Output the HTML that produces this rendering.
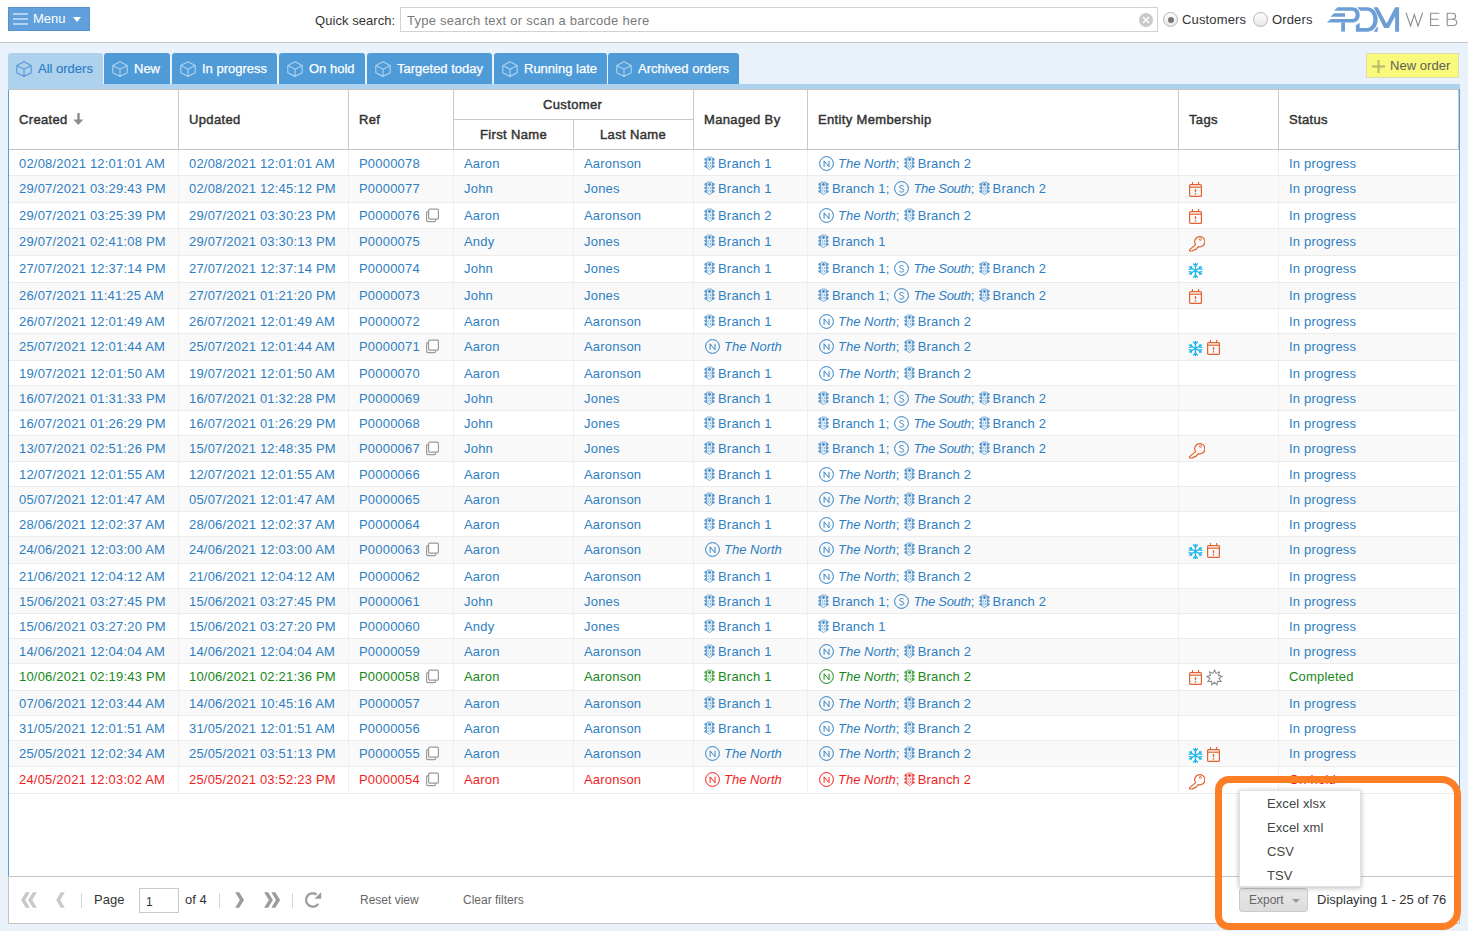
<!DOCTYPE html>
<html><head><meta charset="utf-8"><title>Orders</title>
<style>
*{box-sizing:border-box}
html,body{margin:0;padding:0}
body{width:1468px;height:931px;overflow:hidden;position:relative;background:#fff;font-family:"Liberation Sans",sans-serif;font-size:13px;color:#333}
.a{position:absolute}
#top{position:absolute;left:0;top:0;width:1468px;height:43px;background:#fff;border-bottom:1px solid #c6c6c6}
#main{position:absolute;left:0;top:43px;width:1468px;height:888px;background:#e9f1fb}
.menu{position:absolute;left:8px;top:7px;width:82px;height:24px;background:#60a0dc;border:1px solid #5694d0}
.menu .hb{position:absolute;left:4px;width:15px;height:2px;background:#b3d0ee}
.menu .lbl{position:absolute;left:24px;top:3px;color:#fff;font-size:13px;line-height:15px}
.menu .arr{position:absolute;left:64px;top:9px;width:0;height:0;border-left:4px solid transparent;border-right:4px solid transparent;border-top:5px solid #fff}
.qs{position:absolute;left:315px;top:13px;font-size:13px;line-height:16px;color:#333;letter-spacing:0.05px}
.inp{position:absolute;left:400px;top:7px;width:758px;height:25px;border:1px solid #d2d2d2;background:#fff}
.inp .ph{position:absolute;left:6px;top:5px;font-size:13px;line-height:16px;color:#7a7a7a;letter-spacing:0.25px}
.clr{position:absolute;left:738px;top:5px;width:14px;height:14px;border-radius:50%;background:#c9c9c9}
.radio{position:absolute;top:12px;width:15px;height:15px;border-radius:50%;border:1px solid #b5b5b5;background:linear-gradient(#fdfdfd,#e9e9e9)}
.radio .dot{position:absolute;left:3.5px;top:3.5px;width:6px;height:6px;border-radius:50%;background:#777}
.rl{position:absolute;top:12px;font-size:13px;line-height:16px;color:#333;letter-spacing:0.15px}
.tab{position:absolute;top:53px;height:31px;background:#4e9bd8;border-radius:3px 3px 0 0;color:#fff;font-size:13px}
.tab svg{position:absolute;left:8px;top:8px;width:16px;height:16px;color:#a9d0f0}
.tab span{position:absolute;left:30px;top:8px;line-height:15px;-webkit-text-stroke:0.25px #fff;white-space:nowrap}
.tab.act{background:#aed1ee;color:#2a7dc6}
.tab.act svg{color:#5b9ad6}
.tab.act span{-webkit-text-stroke:0.15px #2a7dc6}
.strip{position:absolute;left:8px;top:84px;width:1452px;height:5px;background:#aed1ee}
.neworder{position:absolute;left:1366px;top:53px;width:93px;height:25px;background:#f9f97b;border:1px solid #dcdcb4}
.grid{position:absolute;left:8px;top:89px;width:1452px;height:788px;background:#fff;border-left:1px solid #5c9ad8;border-right:1px solid #5c9ad8}
.gtop{position:absolute;left:8px;top:89px;width:1451px;height:1px;background:#c4c4c4}
.hdr{position:absolute;top:90px;height:59px}
.hb2{position:absolute;top:149px;left:9px;width:1450px;height:1px;background:#c4c4c4}
.hv{position:absolute;top:90px;width:1px;height:59px;background:#c8c8c8}
.ht{position:absolute;margin-top:1px;font-weight:normal;-webkit-text-stroke:0.45px #333;letter-spacing:0.35px;font-size:13px;line-height:16px;color:#333;white-space:nowrap}
.row{position:absolute;left:9px;width:1449px}
.rb{position:absolute;left:9px;width:1449px;height:1px;background:#ececec}
.vl{position:absolute;top:150px;width:1px;height:644px;background:#efefef}
.rc .t{position:absolute;white-space:nowrap;font-size:13px;line-height:16px;letter-spacing:0.2px}
.rc svg{position:absolute}
.cp{width:16px;height:16px}
.tg{width:18px;height:18px}
.e svg.tl{position:static;display:inline-block;width:11px;height:14px;vertical-align:-2px;margin-right:3px;color:inherit}
.e svg.ci{position:static;display:inline-block;width:15px;height:15px;vertical-align:-3px;margin-left:1px;margin-right:4px;color:inherit}
.e{margin-right:4px}
.e i{font-style:italic;letter-spacing:-0.3px}
.tb{position:absolute;left:8px;top:876px;width:1452px;height:48px;background:#fff;border:1px solid #c4c4c4}
.tbt{position:absolute;font-size:13px;line-height:15px;color:#333;white-space:nowrap}
.tbs{position:absolute;top:893px;width:1px;height:15px;background:#d6d6d6}
.tbg{position:absolute;font-size:12px;line-height:14px;color:#666;white-space:nowrap}
.orange{position:absolute;left:1215px;top:776px;width:246px;height:154px;border:7px solid #fd7e25;border-radius:14px 19px 19px 14px}
.emenu{position:absolute;left:1239px;top:790px;width:122px;height:97px;background:#fff;border:1px solid #e0e0e0;box-shadow:0 1px 5px rgba(0,0,0,0.28)}
.emenu div{position:absolute;left:26px;font-size:13px;line-height:16px;color:#444;letter-spacing:0.1px}
.export{position:absolute;left:1239px;top:888px;width:69px;height:24px;border:1px solid #cacaca;border-radius:3px;background:linear-gradient(#e8e8e8,#dcdcdc)}
</style></head><body>
<svg width="0" height="0" style="position:absolute">
<defs>
<symbol id="tl" viewBox="0 0 11 14">
<g opacity="0.9">
<path d="M3.2 1.1h4.6l0.4 0.6v10.2l-2.7 1.6l-2.7-1.6V1.7z" fill="none" stroke="currentColor" stroke-width="0.95" opacity="0.75"/>
<circle cx="5.5" cy="3.5" r="1.4" fill="currentColor"/>
<circle cx="5.5" cy="7" r="1.1" fill="none" stroke="currentColor" stroke-width="0.8" stroke-dasharray="1 0.7"/>
<circle cx="5.5" cy="10.2" r="1.1" fill="none" stroke="currentColor" stroke-width="0.8" stroke-dasharray="1 0.7"/>
<path d="M2.7 1.9C1.2 1.9 0.3 2.4 0.3 3.3C0.3 4.3 1.3 4.8 2.7 4.9zM8.3 1.9C9.8 1.9 10.7 2.4 10.7 3.3C10.7 4.3 9.7 4.8 8.3 4.9zM2.7 5.4C1.2 5.4 0.3 5.9 0.3 6.8C0.3 7.8 1.3 8.3 2.7 8.4zM8.3 5.4C9.8 5.4 10.7 5.9 10.7 6.8C10.7 7.8 9.7 8.3 8.3 8.4zM2.7 8.9C1.2 8.9 0.3 9.4 0.3 10.3C0.3 11.3 1.3 11.8 2.7 11.9zM8.3 8.9C9.8 8.9 10.7 9.4 10.7 10.3C10.7 11.3 9.7 11.8 8.3 11.9z" fill="currentColor" opacity="0.85"/>
</g>
</symbol>
<symbol id="cn" viewBox="0 0 15 15">
<circle cx="7.5" cy="7.5" r="6.9" fill="none" stroke="currentColor" stroke-width="1"/>
<path d="M5.1 10.8V4.8L10 10.8V4.8" fill="none" stroke="currentColor" stroke-width="0.95"/>
</symbol>
<symbol id="cs" viewBox="0 0 15 15">
<circle cx="7.5" cy="7.5" r="6.9" fill="none" stroke="currentColor" stroke-width="1"/>
<path d="M9.6 5.2c-0.4-0.5-1.1-0.8-2-0.8c-1.2 0-2 0.6-2 1.5c0 1.9 4.2 1.3 4.2 3.4c0 1-0.9 1.7-2.2 1.7c-0.9 0-1.7-0.3-2.2-0.9" fill="none" stroke="currentColor" stroke-width="0.95"/>
</symbol>
<symbol id="copy" viewBox="0 0 16 16">
<rect x="1.6" y="4.6" width="9" height="10" rx="1.3" fill="none" stroke="#9a9a9a" stroke-width="1.2"/>
<rect x="3.6" y="2.2" width="9.8" height="10" rx="1.3" fill="#fff" stroke="#9a9a9a" stroke-width="1.2"/>
</symbol>
<symbol id="cal" viewBox="0 0 18 18">
<rect x="2.6" y="3.6" width="11.8" height="11.8" rx="1" fill="none" stroke="#e0622e" stroke-width="1.2"/>
<path d="M2.6 6.2h11.8" stroke="#e0622e" stroke-width="1.2"/>
<path d="M5.5 1v2.6M11.6 1v2.6" stroke="#e0622e" stroke-width="1.1"/>
<path d="M8.5 8.1v3" stroke="#e0622e" stroke-width="1.3"/>
<circle cx="8.5" cy="12.9" r="0.8" fill="#e0622e"/>
</symbol>
<symbol id="key" viewBox="0 0 18 18">
<path d="M11.3 12.6L9 15.3H8L7.3 16.2H6.3L5.6 17H2.6V15.6L8.6 10.6A5.1 5.1 0 1 1 11.3 12.6Z" fill="none" stroke="#e0622e" stroke-width="1.2" stroke-linejoin="round"/>
<circle cx="13.4" cy="5.4" r="1" fill="none" stroke="#e0622e" stroke-width="0.9"/>
</symbol>
<symbol id="snow" viewBox="0 0 18 18">
<g stroke="#1fb5ec" stroke-width="1.4" stroke-linecap="round" fill="none">
<path d="M8.5 2.5v14M2.4 6l12.2 7M2.4 13l12.2-7"/>
<path d="M6.6 3l1.9 1.7l1.9-1.7M6.6 16l1.9-1.7l1.9 1.7"/>
<path d="M2.2 8.4l2.5-0.6l-0.7-2.4M14.8 10.6l-2.5 0.6l0.7 2.4M2.2 10.6l2.5 0.6l-0.7 2.4M14.8 8.4l-2.5-0.6l0.7-2.4"/>
</g>
</symbol>
<symbol id="star" viewBox="0 0 18 18"><path d="M9.50 1.10L11.07 4.38L14.39 2.88L13.48 6.40L16.98 7.38L14.03 9.50L16.08 12.50L12.46 12.22L12.10 15.84L9.50 13.30L6.90 15.84L6.54 12.22L2.92 12.50L4.97 9.50L2.02 7.38L5.52 6.40L4.61 2.88L7.93 4.38Z" fill="none" stroke="#8c8c8c" stroke-width="1.1" stroke-linejoin="miter"/></symbol>
<symbol id="cube" viewBox="0 0 16 16">
<path d="M8 0.7l7.2 3.8v7.2L8 15.4L0.8 11.7V4.5zM0.8 4.5L8 8.2l7.2-3.7M8 8.2v7.2" fill="none" stroke="currentColor" stroke-width="1.2" stroke-linejoin="round"/>
</symbol>
</defs>
</svg>

<div id="top">
  <div class="menu">
    <div class="hb" style="top:5px"></div><div class="hb" style="top:10px"></div><div class="hb" style="top:15px"></div>
    <div class="lbl">Menu</div>
    <div class="arr"></div>
  </div>
  <div class="qs">Quick search:</div>
  <div class="inp"><div class="ph">Type search text or scan a barcode here</div>
    <div class="clr"><svg width="14" height="14" style="position:absolute;left:0;top:0"><path d="M4 4l6 6M10 4l-6 6" stroke="#fff" stroke-width="1.5"/></svg></div>
  </div>
  <div class="radio" style="left:1163px"><div class="dot"></div></div>
  <div class="rl" style="left:1182px">Customers</div>
  <div class="radio" style="left:1253px"></div>
  <div class="rl" style="left:1272px">Orders</div>
  <svg class="a" style="left:1324px;top:4px" width="80" height="32" viewBox="0 0 80 32">
    <g fill="#6d9fd6">
      <path d="M13.6 3.3H28C33.2 3.3 35.7 6.6 35.7 10.9C35.7 15.2 33.2 18.5 28 18.5H2.7L6.8 15H28C30.4 15 31.6 13.2 31.6 10.9C31.6 8.6 30.4 6.8 28 6.8H10.1Z"/>
      <path d="M10.1 9.3H21V12.8H6.5Z"/>
      <path d="M17.2 18.5H21V27.6H17.2Z"/>
      <path d="M33 3.3H43C49.5 3.3 53.7 8.8 53.7 15.5C53.7 22.4 49.5 27.8 43 27.8H31.9V21.3L35.7 18.8V24H43C47 24 49.3 20.3 49.3 15.5C49.3 10.7 47 6.8 43 6.8H36.5Z"/>
      <path d="M49.6 27.8L53.7 22V27.8Z"/>
      <path d="M49.6 3.3H53.7L62.6 19.6L71.1 3.3H75.1V27.8H71.1V12.3L64.9 24H60.2Z"/>
    </g>
  </svg>
  <svg class="a" style="left:1400px;top:8px" width="64" height="24" viewBox="1400 8 64 24">
    <g fill="none" stroke="#8e8e8e" stroke-width="1.1">
      <path d="M1406 12.8L1410.6 26L1414.3 14.6L1418 26L1422.6 12.8"/>
      <path d="M1439.4 13.3H1430.6V25.5H1439.4M1430.6 19.3H1438.6"/>
      <path d="M1447.2 25.5V13.3H1452C1454.4 13.3 1455.6 14.5 1455.6 16.2C1455.6 17.9 1454.4 19.2 1452 19.2H1447.2M1452 19.2C1455 19.2 1456.8 20.5 1456.8 22.4C1456.8 24.3 1455 25.5 1452 25.5H1447.2"/>
    </g>
  </svg>
</div>
<div id="main"></div>
<div class="tab act" style="left:8px;width:95px"><svg><use href="#cube"/></svg><span>All orders</span></div>
<div class="tab" style="left:104px;width:66px"><svg><use href="#cube"/></svg><span>New</span></div>
<div class="tab" style="left:172px;width:105px"><svg><use href="#cube"/></svg><span>In progress</span></div>
<div class="tab" style="left:279px;width:86px"><svg><use href="#cube"/></svg><span>On hold</span></div>
<div class="tab" style="left:367px;width:125px"><svg><use href="#cube"/></svg><span>Targeted today</span></div>
<div class="tab" style="left:494px;width:113px"><svg><use href="#cube"/></svg><span>Running late</span></div>
<div class="tab" style="left:608px;width:131px"><svg><use href="#cube"/></svg><span>Archived orders</span></div>
<div class="neworder">
  <svg class="a" style="left:5px;top:6px" width="13" height="13"><path d="M6.5 0v13M0 6.5h13" stroke="#b8b66c" stroke-width="1.9"/></svg>
  <div class="a" style="left:23px;top:4px;font-size:13px;line-height:16px;color:#60605a;letter-spacing:0.05px">New order</div>
</div>
<div class="strip"></div>
<div class="grid"></div>
<div class="gtop"></div>
<div class="hb2"></div>
<div class="hv" style="left:178px"></div>
<div class="hv" style="left:348px"></div>
<div class="hv" style="left:453px"></div>
<div class="hv" style="left:573px;top:120px;height:28px"></div>
<div class="hv" style="left:693px"></div>
<div class="hv" style="left:807px"></div>
<div class="hv" style="left:1178px"></div>
<div class="hv" style="left:1278px"></div>
<div class="hv" style="left:1458px"></div>
<div class="a" style="left:453px;top:119px;width:240px;height:1px;background:#c8c8c8"></div>
<div class="ht" style="left:19px;top:111px">Created</div><svg class="a" style="left:73px;top:113px" width="11" height="13"><path d="M4.3 0h2.4v7H4.3z M0.2 6.6h10.2L5.3 12z" fill="#8c8c8c"/></svg>
<div class="ht" style="left:189px;top:111px">Updated</div>
<div class="ht" style="left:359px;top:111px">Ref</div>
<div class="ht" style="left:543px;top:96px">Customer</div>
<div class="ht" style="left:480px;top:126px">First Name</div>
<div class="ht" style="left:600px;top:126px">Last Name</div>
<div class="ht" style="left:704px;top:111px">Managed By</div>
<div class="ht" style="left:818px;top:111px">Entity Membership</div>
<div class="ht" style="left:1189px;top:111px">Tags</div>
<div class="ht" style="left:1289px;top:111px">Status</div>
<div class="row" style="top:150px;height:25px;background:#ffffff"></div><div class="rb" style="top:175px"></div><div class="rc" style="color:#2d7ec2"><div class="t" style="left:19px;top:156px">02/08/2021 12:01:01 AM</div><div class="t" style="left:189px;top:156px">02/08/2021 12:01:01 AM</div><div class="t" style="left:359px;top:156px">P0000078</div><div class="t" style="left:464px;top:156px">Aaron</div><div class="t" style="left:584px;top:156px">Aaronson</div><div class="t" style="left:704px;top:156px"><span class="e"><svg class="tl"><use href="#tl"/></svg>Branch 1</span></div><div class="t" style="left:818px;top:156px"><span class="e"><svg class="ci"><use href="#cn"/></svg><i style="letter-spacing:0px">The North</i>;</span><span class="e"><svg class="tl"><use href="#tl"/></svg>Branch 2</span></div><div class="t" style="left:1289px;top:156px">In progress</div></div><div class="row" style="top:176px;height:26px;background:#f9f9f9"></div><div class="rb" style="top:202px"></div><div class="rc" style="color:#2d7ec2"><div class="t" style="left:19px;top:181px">29/07/2021 03:29:43 PM</div><div class="t" style="left:189px;top:181px">02/08/2021 12:45:12 PM</div><div class="t" style="left:359px;top:181px">P0000077</div><div class="t" style="left:464px;top:181px">John</div><div class="t" style="left:584px;top:181px">Jones</div><div class="t" style="left:704px;top:181px"><span class="e"><svg class="tl"><use href="#tl"/></svg>Branch 1</span></div><div class="t" style="left:818px;top:181px"><span class="e"><svg class="tl"><use href="#tl"/></svg>Branch 1;</span><span class="e"><svg class="ci"><use href="#cs"/></svg><i style="letter-spacing:-0.3px">The South</i>;</span><span class="e"><svg class="tl"><use href="#tl"/></svg>Branch 2</span></div><svg class="tg" style="left:1187px;top:181px"><use href="#cal"/></svg><div class="t" style="left:1289px;top:181px">In progress</div></div><div class="row" style="top:203px;height:25px;background:#ffffff"></div><div class="rb" style="top:228px"></div><div class="rc" style="color:#2d7ec2"><div class="t" style="left:19px;top:208px">29/07/2021 03:25:39 PM</div><div class="t" style="left:189px;top:208px">29/07/2021 03:30:23 PM</div><div class="t" style="left:359px;top:208px">P0000076</div><div class="t" style="left:464px;top:208px">Aaron</div><div class="t" style="left:584px;top:208px">Aaronson</div><svg class="cp" style="left:425px;top:207px"><use href="#copy"/></svg><div class="t" style="left:704px;top:208px"><span class="e"><svg class="tl"><use href="#tl"/></svg>Branch 2</span></div><div class="t" style="left:818px;top:208px"><span class="e"><svg class="ci"><use href="#cn"/></svg><i style="letter-spacing:0px">The North</i>;</span><span class="e"><svg class="tl"><use href="#tl"/></svg>Branch 2</span></div><svg class="tg" style="left:1187px;top:208px"><use href="#cal"/></svg><div class="t" style="left:1289px;top:208px">In progress</div></div><div class="row" style="top:229px;height:26px;background:#f9f9f9"></div><div class="rb" style="top:255px"></div><div class="rc" style="color:#2d7ec2"><div class="t" style="left:19px;top:234px">29/07/2021 02:41:08 PM</div><div class="t" style="left:189px;top:234px">29/07/2021 03:30:13 PM</div><div class="t" style="left:359px;top:234px">P0000075</div><div class="t" style="left:464px;top:234px">Andy</div><div class="t" style="left:584px;top:234px">Jones</div><div class="t" style="left:704px;top:234px"><span class="e"><svg class="tl"><use href="#tl"/></svg>Branch 1</span></div><div class="t" style="left:818px;top:234px"><span class="e"><svg class="tl"><use href="#tl"/></svg>Branch 1</span></div><svg class="tg" style="left:1187px;top:234px"><use href="#key"/></svg><div class="t" style="left:1289px;top:234px">In progress</div></div><div class="row" style="top:256px;height:26px;background:#ffffff"></div><div class="rb" style="top:282px"></div><div class="rc" style="color:#2d7ec2"><div class="t" style="left:19px;top:261px">27/07/2021 12:37:14 PM</div><div class="t" style="left:189px;top:261px">27/07/2021 12:37:14 PM</div><div class="t" style="left:359px;top:261px">P0000074</div><div class="t" style="left:464px;top:261px">John</div><div class="t" style="left:584px;top:261px">Jones</div><div class="t" style="left:704px;top:261px"><span class="e"><svg class="tl"><use href="#tl"/></svg>Branch 1</span></div><div class="t" style="left:818px;top:261px"><span class="e"><svg class="tl"><use href="#tl"/></svg>Branch 1;</span><span class="e"><svg class="ci"><use href="#cs"/></svg><i style="letter-spacing:-0.3px">The South</i>;</span><span class="e"><svg class="tl"><use href="#tl"/></svg>Branch 2</span></div><svg class="tg" style="left:1187px;top:261px"><use href="#snow"/></svg><div class="t" style="left:1289px;top:261px">In progress</div></div><div class="row" style="top:283px;height:25px;background:#f9f9f9"></div><div class="rb" style="top:308px"></div><div class="rc" style="color:#2d7ec2"><div class="t" style="left:19px;top:288px">26/07/2021 11:41:25 AM</div><div class="t" style="left:189px;top:288px">27/07/2021 01:21:20 PM</div><div class="t" style="left:359px;top:288px">P0000073</div><div class="t" style="left:464px;top:288px">John</div><div class="t" style="left:584px;top:288px">Jones</div><div class="t" style="left:704px;top:288px"><span class="e"><svg class="tl"><use href="#tl"/></svg>Branch 1</span></div><div class="t" style="left:818px;top:288px"><span class="e"><svg class="tl"><use href="#tl"/></svg>Branch 1;</span><span class="e"><svg class="ci"><use href="#cs"/></svg><i style="letter-spacing:-0.3px">The South</i>;</span><span class="e"><svg class="tl"><use href="#tl"/></svg>Branch 2</span></div><svg class="tg" style="left:1187px;top:288px"><use href="#cal"/></svg><div class="t" style="left:1289px;top:288px">In progress</div></div><div class="row" style="top:309px;height:24px;background:#ffffff"></div><div class="rb" style="top:333px"></div><div class="rc" style="color:#2d7ec2"><div class="t" style="left:19px;top:314px">26/07/2021 12:01:49 AM</div><div class="t" style="left:189px;top:314px">26/07/2021 12:01:49 AM</div><div class="t" style="left:359px;top:314px">P0000072</div><div class="t" style="left:464px;top:314px">Aaron</div><div class="t" style="left:584px;top:314px">Aaronson</div><div class="t" style="left:704px;top:314px"><span class="e"><svg class="tl"><use href="#tl"/></svg>Branch 1</span></div><div class="t" style="left:818px;top:314px"><span class="e"><svg class="ci"><use href="#cn"/></svg><i style="letter-spacing:0px">The North</i>;</span><span class="e"><svg class="tl"><use href="#tl"/></svg>Branch 2</span></div><div class="t" style="left:1289px;top:314px">In progress</div></div><div class="row" style="top:334px;height:26px;background:#f9f9f9"></div><div class="rb" style="top:360px"></div><div class="rc" style="color:#2d7ec2"><div class="t" style="left:19px;top:339px">25/07/2021 12:01:44 AM</div><div class="t" style="left:189px;top:339px">25/07/2021 12:01:44 AM</div><div class="t" style="left:359px;top:339px">P0000071</div><div class="t" style="left:464px;top:339px">Aaron</div><div class="t" style="left:584px;top:339px">Aaronson</div><svg class="cp" style="left:425px;top:338px"><use href="#copy"/></svg><div class="t" style="left:704px;top:339px"><span class="e"><svg class="ci"><use href="#cn"/></svg><i style="letter-spacing:0px">The North</i></span></div><div class="t" style="left:818px;top:339px"><span class="e"><svg class="ci"><use href="#cn"/></svg><i style="letter-spacing:0px">The North</i>;</span><span class="e"><svg class="tl"><use href="#tl"/></svg>Branch 2</span></div><svg class="tg" style="left:1187px;top:339px"><use href="#snow"/></svg><svg class="tg" style="left:1205px;top:339px"><use href="#cal"/></svg><div class="t" style="left:1289px;top:339px">In progress</div></div><div class="row" style="top:361px;height:24px;background:#ffffff"></div><div class="rb" style="top:385px"></div><div class="rc" style="color:#2d7ec2"><div class="t" style="left:19px;top:366px">19/07/2021 12:01:50 AM</div><div class="t" style="left:189px;top:366px">19/07/2021 12:01:50 AM</div><div class="t" style="left:359px;top:366px">P0000070</div><div class="t" style="left:464px;top:366px">Aaron</div><div class="t" style="left:584px;top:366px">Aaronson</div><div class="t" style="left:704px;top:366px"><span class="e"><svg class="tl"><use href="#tl"/></svg>Branch 1</span></div><div class="t" style="left:818px;top:366px"><span class="e"><svg class="ci"><use href="#cn"/></svg><i style="letter-spacing:0px">The North</i>;</span><span class="e"><svg class="tl"><use href="#tl"/></svg>Branch 2</span></div><div class="t" style="left:1289px;top:366px">In progress</div></div><div class="row" style="top:386px;height:24px;background:#f9f9f9"></div><div class="rb" style="top:410px"></div><div class="rc" style="color:#2d7ec2"><div class="t" style="left:19px;top:391px">16/07/2021 01:31:33 PM</div><div class="t" style="left:189px;top:391px">16/07/2021 01:32:28 PM</div><div class="t" style="left:359px;top:391px">P0000069</div><div class="t" style="left:464px;top:391px">John</div><div class="t" style="left:584px;top:391px">Jones</div><div class="t" style="left:704px;top:391px"><span class="e"><svg class="tl"><use href="#tl"/></svg>Branch 1</span></div><div class="t" style="left:818px;top:391px"><span class="e"><svg class="tl"><use href="#tl"/></svg>Branch 1;</span><span class="e"><svg class="ci"><use href="#cs"/></svg><i style="letter-spacing:-0.3px">The South</i>;</span><span class="e"><svg class="tl"><use href="#tl"/></svg>Branch 2</span></div><div class="t" style="left:1289px;top:391px">In progress</div></div><div class="row" style="top:411px;height:24px;background:#ffffff"></div><div class="rb" style="top:435px"></div><div class="rc" style="color:#2d7ec2"><div class="t" style="left:19px;top:416px">16/07/2021 01:26:29 PM</div><div class="t" style="left:189px;top:416px">16/07/2021 01:26:29 PM</div><div class="t" style="left:359px;top:416px">P0000068</div><div class="t" style="left:464px;top:416px">John</div><div class="t" style="left:584px;top:416px">Jones</div><div class="t" style="left:704px;top:416px"><span class="e"><svg class="tl"><use href="#tl"/></svg>Branch 1</span></div><div class="t" style="left:818px;top:416px"><span class="e"><svg class="tl"><use href="#tl"/></svg>Branch 1;</span><span class="e"><svg class="ci"><use href="#cs"/></svg><i style="letter-spacing:-0.3px">The South</i>;</span><span class="e"><svg class="tl"><use href="#tl"/></svg>Branch 2</span></div><div class="t" style="left:1289px;top:416px">In progress</div></div><div class="row" style="top:436px;height:25px;background:#f9f9f9"></div><div class="rb" style="top:461px"></div><div class="rc" style="color:#2d7ec2"><div class="t" style="left:19px;top:441px">13/07/2021 02:51:26 PM</div><div class="t" style="left:189px;top:441px">15/07/2021 12:48:35 PM</div><div class="t" style="left:359px;top:441px">P0000067</div><div class="t" style="left:464px;top:441px">John</div><div class="t" style="left:584px;top:441px">Jones</div><svg class="cp" style="left:425px;top:440px"><use href="#copy"/></svg><div class="t" style="left:704px;top:441px"><span class="e"><svg class="tl"><use href="#tl"/></svg>Branch 1</span></div><div class="t" style="left:818px;top:441px"><span class="e"><svg class="tl"><use href="#tl"/></svg>Branch 1;</span><span class="e"><svg class="ci"><use href="#cs"/></svg><i style="letter-spacing:-0.3px">The South</i>;</span><span class="e"><svg class="tl"><use href="#tl"/></svg>Branch 2</span></div><svg class="tg" style="left:1187px;top:441px"><use href="#key"/></svg><div class="t" style="left:1289px;top:441px">In progress</div></div><div class="row" style="top:462px;height:24px;background:#ffffff"></div><div class="rb" style="top:486px"></div><div class="rc" style="color:#2d7ec2"><div class="t" style="left:19px;top:467px">12/07/2021 12:01:55 AM</div><div class="t" style="left:189px;top:467px">12/07/2021 12:01:55 AM</div><div class="t" style="left:359px;top:467px">P0000066</div><div class="t" style="left:464px;top:467px">Aaron</div><div class="t" style="left:584px;top:467px">Aaronson</div><div class="t" style="left:704px;top:467px"><span class="e"><svg class="tl"><use href="#tl"/></svg>Branch 1</span></div><div class="t" style="left:818px;top:467px"><span class="e"><svg class="ci"><use href="#cn"/></svg><i style="letter-spacing:0px">The North</i>;</span><span class="e"><svg class="tl"><use href="#tl"/></svg>Branch 2</span></div><div class="t" style="left:1289px;top:467px">In progress</div></div><div class="row" style="top:487px;height:24px;background:#f9f9f9"></div><div class="rb" style="top:511px"></div><div class="rc" style="color:#2d7ec2"><div class="t" style="left:19px;top:492px">05/07/2021 12:01:47 AM</div><div class="t" style="left:189px;top:492px">05/07/2021 12:01:47 AM</div><div class="t" style="left:359px;top:492px">P0000065</div><div class="t" style="left:464px;top:492px">Aaron</div><div class="t" style="left:584px;top:492px">Aaronson</div><div class="t" style="left:704px;top:492px"><span class="e"><svg class="tl"><use href="#tl"/></svg>Branch 1</span></div><div class="t" style="left:818px;top:492px"><span class="e"><svg class="ci"><use href="#cn"/></svg><i style="letter-spacing:0px">The North</i>;</span><span class="e"><svg class="tl"><use href="#tl"/></svg>Branch 2</span></div><div class="t" style="left:1289px;top:492px">In progress</div></div><div class="row" style="top:512px;height:24px;background:#ffffff"></div><div class="rb" style="top:536px"></div><div class="rc" style="color:#2d7ec2"><div class="t" style="left:19px;top:517px">28/06/2021 12:02:37 AM</div><div class="t" style="left:189px;top:517px">28/06/2021 12:02:37 AM</div><div class="t" style="left:359px;top:517px">P0000064</div><div class="t" style="left:464px;top:517px">Aaron</div><div class="t" style="left:584px;top:517px">Aaronson</div><div class="t" style="left:704px;top:517px"><span class="e"><svg class="tl"><use href="#tl"/></svg>Branch 1</span></div><div class="t" style="left:818px;top:517px"><span class="e"><svg class="ci"><use href="#cn"/></svg><i style="letter-spacing:0px">The North</i>;</span><span class="e"><svg class="tl"><use href="#tl"/></svg>Branch 2</span></div><div class="t" style="left:1289px;top:517px">In progress</div></div><div class="row" style="top:537px;height:26px;background:#f9f9f9"></div><div class="rb" style="top:563px"></div><div class="rc" style="color:#2d7ec2"><div class="t" style="left:19px;top:542px">24/06/2021 12:03:00 AM</div><div class="t" style="left:189px;top:542px">24/06/2021 12:03:00 AM</div><div class="t" style="left:359px;top:542px">P0000063</div><div class="t" style="left:464px;top:542px">Aaron</div><div class="t" style="left:584px;top:542px">Aaronson</div><svg class="cp" style="left:425px;top:541px"><use href="#copy"/></svg><div class="t" style="left:704px;top:542px"><span class="e"><svg class="ci"><use href="#cn"/></svg><i style="letter-spacing:0px">The North</i></span></div><div class="t" style="left:818px;top:542px"><span class="e"><svg class="ci"><use href="#cn"/></svg><i style="letter-spacing:0px">The North</i>;</span><span class="e"><svg class="tl"><use href="#tl"/></svg>Branch 2</span></div><svg class="tg" style="left:1187px;top:542px"><use href="#snow"/></svg><svg class="tg" style="left:1205px;top:542px"><use href="#cal"/></svg><div class="t" style="left:1289px;top:542px">In progress</div></div><div class="row" style="top:564px;height:24px;background:#ffffff"></div><div class="rb" style="top:588px"></div><div class="rc" style="color:#2d7ec2"><div class="t" style="left:19px;top:569px">21/06/2021 12:04:12 AM</div><div class="t" style="left:189px;top:569px">21/06/2021 12:04:12 AM</div><div class="t" style="left:359px;top:569px">P0000062</div><div class="t" style="left:464px;top:569px">Aaron</div><div class="t" style="left:584px;top:569px">Aaronson</div><div class="t" style="left:704px;top:569px"><span class="e"><svg class="tl"><use href="#tl"/></svg>Branch 1</span></div><div class="t" style="left:818px;top:569px"><span class="e"><svg class="ci"><use href="#cn"/></svg><i style="letter-spacing:0px">The North</i>;</span><span class="e"><svg class="tl"><use href="#tl"/></svg>Branch 2</span></div><div class="t" style="left:1289px;top:569px">In progress</div></div><div class="row" style="top:589px;height:24px;background:#f9f9f9"></div><div class="rb" style="top:613px"></div><div class="rc" style="color:#2d7ec2"><div class="t" style="left:19px;top:594px">15/06/2021 03:27:45 PM</div><div class="t" style="left:189px;top:594px">15/06/2021 03:27:45 PM</div><div class="t" style="left:359px;top:594px">P0000061</div><div class="t" style="left:464px;top:594px">John</div><div class="t" style="left:584px;top:594px">Jones</div><div class="t" style="left:704px;top:594px"><span class="e"><svg class="tl"><use href="#tl"/></svg>Branch 1</span></div><div class="t" style="left:818px;top:594px"><span class="e"><svg class="tl"><use href="#tl"/></svg>Branch 1;</span><span class="e"><svg class="ci"><use href="#cs"/></svg><i style="letter-spacing:-0.3px">The South</i>;</span><span class="e"><svg class="tl"><use href="#tl"/></svg>Branch 2</span></div><div class="t" style="left:1289px;top:594px">In progress</div></div><div class="row" style="top:614px;height:24px;background:#ffffff"></div><div class="rb" style="top:638px"></div><div class="rc" style="color:#2d7ec2"><div class="t" style="left:19px;top:619px">15/06/2021 03:27:20 PM</div><div class="t" style="left:189px;top:619px">15/06/2021 03:27:20 PM</div><div class="t" style="left:359px;top:619px">P0000060</div><div class="t" style="left:464px;top:619px">Andy</div><div class="t" style="left:584px;top:619px">Jones</div><div class="t" style="left:704px;top:619px"><span class="e"><svg class="tl"><use href="#tl"/></svg>Branch 1</span></div><div class="t" style="left:818px;top:619px"><span class="e"><svg class="tl"><use href="#tl"/></svg>Branch 1</span></div><div class="t" style="left:1289px;top:619px">In progress</div></div><div class="row" style="top:639px;height:24px;background:#f9f9f9"></div><div class="rb" style="top:663px"></div><div class="rc" style="color:#2d7ec2"><div class="t" style="left:19px;top:644px">14/06/2021 12:04:04 AM</div><div class="t" style="left:189px;top:644px">14/06/2021 12:04:04 AM</div><div class="t" style="left:359px;top:644px">P0000059</div><div class="t" style="left:464px;top:644px">Aaron</div><div class="t" style="left:584px;top:644px">Aaronson</div><div class="t" style="left:704px;top:644px"><span class="e"><svg class="tl"><use href="#tl"/></svg>Branch 1</span></div><div class="t" style="left:818px;top:644px"><span class="e"><svg class="ci"><use href="#cn"/></svg><i style="letter-spacing:0px">The North</i>;</span><span class="e"><svg class="tl"><use href="#tl"/></svg>Branch 2</span></div><div class="t" style="left:1289px;top:644px">In progress</div></div><div class="row" style="top:664px;height:26px;background:#ffffff"></div><div class="rb" style="top:690px"></div><div class="rc" style="color:#178817"><div class="t" style="left:19px;top:669px">10/06/2021 02:19:43 PM</div><div class="t" style="left:189px;top:669px">10/06/2021 02:21:36 PM</div><div class="t" style="left:359px;top:669px">P0000058</div><div class="t" style="left:464px;top:669px">Aaron</div><div class="t" style="left:584px;top:669px">Aaronson</div><svg class="cp" style="left:425px;top:668px"><use href="#copy"/></svg><div class="t" style="left:704px;top:669px"><span class="e"><svg class="tl"><use href="#tl"/></svg>Branch 1</span></div><div class="t" style="left:818px;top:669px"><span class="e"><svg class="ci"><use href="#cn"/></svg><i style="letter-spacing:0px">The North</i>;</span><span class="e"><svg class="tl"><use href="#tl"/></svg>Branch 2</span></div><svg class="tg" style="left:1187px;top:669px"><use href="#cal"/></svg><svg class="tg" style="left:1205px;top:669px"><use href="#star"/></svg><div class="t" style="left:1289px;top:669px">Completed</div></div><div class="row" style="top:691px;height:24px;background:#f9f9f9"></div><div class="rb" style="top:715px"></div><div class="rc" style="color:#2d7ec2"><div class="t" style="left:19px;top:696px">07/06/2021 12:03:44 AM</div><div class="t" style="left:189px;top:696px">14/06/2021 10:45:16 AM</div><div class="t" style="left:359px;top:696px">P0000057</div><div class="t" style="left:464px;top:696px">Aaron</div><div class="t" style="left:584px;top:696px">Aaronson</div><div class="t" style="left:704px;top:696px"><span class="e"><svg class="tl"><use href="#tl"/></svg>Branch 1</span></div><div class="t" style="left:818px;top:696px"><span class="e"><svg class="ci"><use href="#cn"/></svg><i style="letter-spacing:0px">The North</i>;</span><span class="e"><svg class="tl"><use href="#tl"/></svg>Branch 2</span></div><div class="t" style="left:1289px;top:696px">In progress</div></div><div class="row" style="top:716px;height:24px;background:#ffffff"></div><div class="rb" style="top:740px"></div><div class="rc" style="color:#2d7ec2"><div class="t" style="left:19px;top:721px">31/05/2021 12:01:51 AM</div><div class="t" style="left:189px;top:721px">31/05/2021 12:01:51 AM</div><div class="t" style="left:359px;top:721px">P0000056</div><div class="t" style="left:464px;top:721px">Aaron</div><div class="t" style="left:584px;top:721px">Aaronson</div><div class="t" style="left:704px;top:721px"><span class="e"><svg class="tl"><use href="#tl"/></svg>Branch 1</span></div><div class="t" style="left:818px;top:721px"><span class="e"><svg class="ci"><use href="#cn"/></svg><i style="letter-spacing:0px">The North</i>;</span><span class="e"><svg class="tl"><use href="#tl"/></svg>Branch 2</span></div><div class="t" style="left:1289px;top:721px">In progress</div></div><div class="row" style="top:741px;height:25px;background:#f9f9f9"></div><div class="rb" style="top:766px"></div><div class="rc" style="color:#2d7ec2"><div class="t" style="left:19px;top:746px">25/05/2021 12:02:34 AM</div><div class="t" style="left:189px;top:746px">25/05/2021 03:51:13 PM</div><div class="t" style="left:359px;top:746px">P0000055</div><div class="t" style="left:464px;top:746px">Aaron</div><div class="t" style="left:584px;top:746px">Aaronson</div><svg class="cp" style="left:425px;top:745px"><use href="#copy"/></svg><div class="t" style="left:704px;top:746px"><span class="e"><svg class="ci"><use href="#cn"/></svg><i style="letter-spacing:0px">The North</i></span></div><div class="t" style="left:818px;top:746px"><span class="e"><svg class="ci"><use href="#cn"/></svg><i style="letter-spacing:0px">The North</i>;</span><span class="e"><svg class="tl"><use href="#tl"/></svg>Branch 2</span></div><svg class="tg" style="left:1187px;top:746px"><use href="#snow"/></svg><svg class="tg" style="left:1205px;top:746px"><use href="#cal"/></svg><div class="t" style="left:1289px;top:746px">In progress</div></div><div class="row" style="top:767px;height:26px;background:#ffffff"></div><div class="rb" style="top:793px"></div><div class="rc" style="color:#f01e1e"><div class="t" style="left:19px;top:772px">24/05/2021 12:03:02 AM</div><div class="t" style="left:189px;top:772px">25/05/2021 03:52:23 PM</div><div class="t" style="left:359px;top:772px">P0000054</div><div class="t" style="left:464px;top:772px">Aaron</div><div class="t" style="left:584px;top:772px">Aaronson</div><svg class="cp" style="left:425px;top:771px"><use href="#copy"/></svg><div class="t" style="left:704px;top:772px"><span class="e"><svg class="ci"><use href="#cn"/></svg><i style="letter-spacing:0px">The North</i></span></div><div class="t" style="left:818px;top:772px"><span class="e"><svg class="ci"><use href="#cn"/></svg><i style="letter-spacing:0px">The North</i>;</span><span class="e"><svg class="tl"><use href="#tl"/></svg>Branch 2</span></div><svg class="tg" style="left:1187px;top:772px"><use href="#key"/></svg><div class="t" style="left:1289px;top:772px">On hold</div></div>
<div class="vl" style="left:178px"></div><div class="vl" style="left:348px"></div><div class="vl" style="left:453px"></div><div class="vl" style="left:573px"></div><div class="vl" style="left:693px"></div><div class="vl" style="left:807px"></div><div class="vl" style="left:1178px"></div><div class="vl" style="left:1278px"></div>
<div class="tb"></div>
<svg class="a" style="left:0;top:880px" width="340" height="40" viewBox="0 880 340 40"><path d="M25.80 892.2H29.90L25.20 899.95L29.90 907.70H25.80L21.1 899.95Z" fill="#c9c9c9"/><path d="M32.80 892.2H36.90L32.20 899.95L36.90 907.70H32.80L28.1 899.95Z" fill="#c9c9c9"/><path d="M60.80 892.2H64.90L60.20 899.95L64.90 907.70H60.80L56.1 899.95Z" fill="#c9c9c9"/><path d="M235.20 892.2H239.20L244.00 900.00L239.20 907.80H235.20L239.90 900.00Z" fill="#9b9b9b"/><path d="M264.10 892.2H268.10L272.90 900.00L268.10 907.80H264.10L268.80 900.00Z" fill="#9b9b9b"/><path d="M271.30 892.2H275.30L280.10 900.00L275.30 907.80H271.30L276.00 900.00Z" fill="#9b9b9b"/><path d="M318.3 903.8A6.7 6.7 0 1 1 316.6 894.5" fill="none" stroke="#9b9b9b" stroke-width="2.2"/><path d="M321.2 892V898.8H314.6Z" fill="#9b9b9b"/></svg>
<div class="tbs" style="left:81px"></div>
<div class="tbt" style="left:94px;top:892px">Page</div>
<div class="a" style="left:139px;top:888px;width:40px;height:25px;border:1px solid #c9c9c9;background:#fff"><div class="a" style="left:6px;top:6px;font-size:12px;line-height:14px;color:#333">1</div></div>
<div class="tbt" style="left:185px;top:892px">of 4</div>
<div class="tbs" style="left:219px"></div>
<div class="tbs" style="left:292px"></div>
<div class="tbg" style="left:360px;top:893px">Reset view</div>
<div class="tbg" style="left:463px;top:893px">Clear filters</div>
<div class="export"><div class="a" style="left:9px;top:4px;font-size:12px;line-height:14px;color:#666">Export</div><div class="a" style="left:52px;top:10px;width:0;height:0;border-left:4px solid transparent;border-right:4px solid transparent;border-top:4px solid #999"></div></div>
<div class="tbt" style="left:1317px;top:892px">Displaying 1 - 25 of 76</div>
<div class="emenu">
  <div style="top:5px;left:27px">Excel xlsx</div>
  <div style="top:29px;left:27px">Excel xml</div>
  <div style="top:53px;left:27px">CSV</div>
  <div style="top:77px;left:27px">TSV</div>
</div>
<div class="orange"></div>
</body></html>
